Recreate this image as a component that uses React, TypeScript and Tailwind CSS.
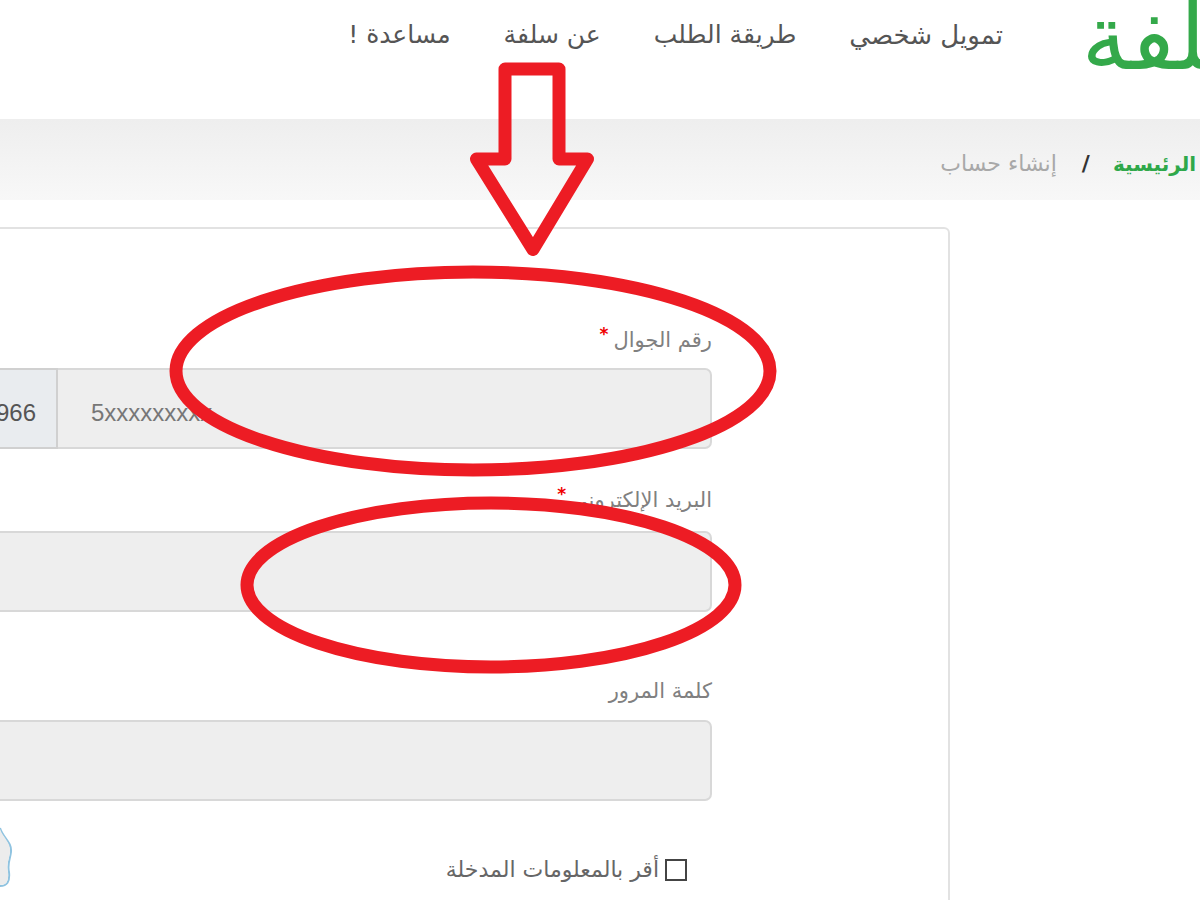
import React from "react";

const font = { fontFamily: '"DejaVu Sans", sans-serif' };

function Label({ text, star }: { text: string; star?: boolean }) {
  return (
    <div className="flex h-[28px] items-center gap-[5px] text-[21px] leading-[28px] text-[#808080]">
      <span>{text}</span>
      {star && <span className="relative top-[-6px] text-[17px] font-bold text-[#f00000]">*</span>}
    </div>
  );
}

function Field({ children }: { children?: React.ReactNode }) {
  return (
    <div dir="ltr" className="flex h-[81px] w-full rounded-r-[7px] border-2 border-l-0 border-[#d8d8d8] bg-[#eeeeee]">
      {children}
    </div>
  );
}

export default function App() {
  return (
    <div dir="rtl" style={font} className="relative h-[900px] w-[1200px] overflow-hidden bg-white">
      <header className="flex h-[119px] items-start">
        <div className="w-[115px] shrink-0">
          <div className="mr-[-85px] mt-[-18px] whitespace-nowrap text-[92px] font-normal leading-[112px] text-[#34a94a]">سلفة</div>
        </div>
        <nav className="mr-[82px] flex items-center gap-[53px] pt-[17px] text-[25px] leading-[36px] text-[#555555] whitespace-nowrap">
          <a className="text-[26px]">تمويل شخصي</a>
          <a>طريقة الطلب</a>
          <a>عن سلفة</a>
          <a>مساعدة !</a>
        </nav>
      </header>

      <div className="flex h-[81px] items-center bg-gradient-to-b from-[#eeeeee] to-[#f8f8f8] pt-[8px] text-[22px] whitespace-nowrap">
        <span className="mr-[-78px] text-[20px] font-bold text-[#2fa84a]">الصفحة الرئيسية</span>
        <span className="ml-[25px] mr-[23px] font-bold text-[#333333]">/</span>
        <span className="text-[#a8a8a8]">إنشاء حساب</span>
      </div>

      <main className="mr-[250px] mt-[27px] h-[800px] w-[1000px] rounded-[6px] border-2 border-[#e2e2e2] pr-[236px] pt-[97px]">
        <form className="w-[712px]">
          <Label text="رقم الجوال" star />
          <div className="mt-[14px]">
            <Field>
              <div className="ml-auto flex w-[calc(100%-57px)] items-center pl-[34px] pt-[8px] text-[24px] text-[#777777]" style={{ fontFamily: '"Liberation Sans", sans-serif' }}>
                5xxxxxxxxx
              </div>
            </Field>
          </div>

          <div className="mt-[37px]">
            <Label text="البريد الإلكتروني" star />
          </div>
          <div className="mt-[17px]">
            <Field />
          </div>

          <div className="mt-[65px]">
            <Label text="كلمة المرور" />
          </div>
          <div className="mt-[15px]">
            <Field />
          </div>

          <div className="relative mt-[57px] flex h-[24px] items-center pr-[25px] text-[22px] leading-[28px] text-[#666666] whitespace-nowrap">
            <span className="h-[22px] w-[22px] shrink-0 border-2 border-[#444444]" />
            <span className="mr-[6px]">أقر بالمعلومات المدخلة</span>
            <svg className="absolute bottom-[-8px] left-0 h-[64px] w-[14px]" viewBox="0 0 14 64" fill="none">
              <path d="M0 2 C3 12 12 16 11 26 C10 34 7 38 9 46 C10 56 7 60 0 60" stroke="#8fc3e0" strokeWidth="2" />
              <path d="M0 3 C3 12 11 16 10 26 C9 34 6 38 8 46 C9 56 6 59 0 59Z" fill="#ececec" />
            </svg>
          </div>
        </form>
      </main>

      <div dir="ltr" className="absolute left-0 top-[368px] flex h-[81px] w-[58px] items-center justify-end overflow-hidden border-y-2 border-r-2 border-[#d0d0d0] bg-[#e9ecef] pr-[20px] pt-[8px] text-[24px] text-[#555555]" style={{ fontFamily: '"Liberation Sans", sans-serif' }}>
        966
      </div>

      <svg className="pointer-events-none absolute inset-0" width="1200" height="900" viewBox="0 0 1200 900" fill="none">
        <path d="M505 69 H559 V159 H587.5 L533 249.5 L476.5 159 H505 Z" stroke="#ed1c24" strokeWidth="13" strokeLinejoin="round" />
        <ellipse cx="473" cy="371" rx="297" ry="99" stroke="#ed1c24" strokeWidth="13" />
        <ellipse cx="491" cy="585" rx="244" ry="82" stroke="#ed1c24" strokeWidth="13" />
      </svg>
    </div>
  );
}
